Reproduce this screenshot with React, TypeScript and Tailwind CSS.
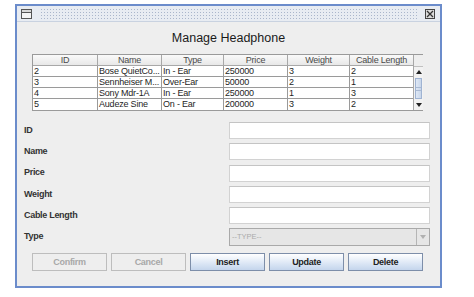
import React from "react";

const rows = [
  ["2", "Bose QuietCo...", "In - Ear", "250000", "3", "2"],
  ["3", "Sennheiser M...", "Over-Ear", "50000", "2", "1"],
  ["4", "Sony Mdr-1A", "In - Ear", "250000", "1", "3"],
  ["5", "Audeze Sine", "On - Ear", "200000", "3", "2"],
];

const headers = ["ID", "Name", "Type", "Price", "Weight", "Cable Length"];
const widths = ["w-[64px]", "w-[64px]", "w-[62px]", "w-[64px]", "w-[62px]", "w-[64px]"];

const labels = ["ID", "Name", "Price", "Weight", "Cable Length"];

function TitleBar() {
  return (
    <div className="h-[16px] flex items-center bg-[#e8ecf2] border-b border-[#c9d2e0]">
      <div className="ml-[4px] w-[11px] h-[10px] border border-[#555] bg-[#f4f4f4] flex flex-col">
        <div className="h-[3px] border-b border-[#555] bg-[#d8d8d8]" />
      </div>
      <div className="flex-1 h-[12px] mx-[8px] bg-[radial-gradient(#aab6cb_0.7px,transparent_0.9px)] bg-[length:3px_3px]" />
      <div className="mr-[5px] w-[10px] h-[10px] border border-[#444] bg-[#dcdcdc] flex items-center justify-center">
        <svg width="8" height="8" viewBox="0 0 8 8">
          <path d="M1 1 L7 7 M7 1 L1 7" stroke="#333" strokeWidth="1.3" />
        </svg>
      </div>
    </div>
  );
}

function HeadphoneTable() {
  return (
    <div className="ml-[15px] w-[391px] flex border border-[#9a9a9a] text-[9px] tracking-[-0.2px] leading-none">
      <div className="flex flex-col">
        <div className="flex h-[11px] bg-[linear-gradient(#fafafa,#e6e6e6)]">
          {headers.map((h, i) => (
            <div
              key={h}
              className={`${widths[i]} ${i > 0 ? "border-l border-[#a8a8a8]" : ""} border-b border-[#a8a8a8] flex items-center justify-center text-[#4a4a4a]`}
            >
              {h}
            </div>
          ))}
        </div>
        {rows.map((r, ri) => (
          <div key={ri} className="flex h-[11px] bg-white">
            {r.map((c, ci) => (
              <div
                key={ci}
                className={`${widths[ci]} ${ci > 0 ? "border-l border-[#9a9a9a]" : ""} ${ri < rows.length - 1 ? "border-b border-[#9a9a9a]" : ""} flex items-center pl-[1px] text-[#1e1e1e] overflow-hidden whitespace-nowrap`}
              >
                {c}
              </div>
            ))}
          </div>
        ))}
      </div>
      <div className="w-[11px] flex flex-col border-l border-[#a8a8a8] bg-[#eeeeee]">
        <div className="h-[11px]" />
        <div className="flex-1 flex flex-col bg-[#f2f2f2] border-t border-[#c0c0c0]">
          <div className="h-[10px] flex items-center justify-center">
            <svg width="6" height="4" viewBox="0 0 6 4">
              <path d="M0 4 L3 0 L6 4 Z" fill="#222" />
            </svg>
          </div>
          <div className="mx-[1px] mt-[1px] h-[21px] border border-[#9fb3d2] bg-[linear-gradient(90deg,#dfe8f5,#c8d6ea)] flex items-center justify-center">
            <div className="w-[5px] h-[4px] border-y border-[#a9b9d2]" />
          </div>
          <div className="flex-1" />
          <div className="h-[10px] flex items-center justify-center">
            <svg width="6" height="4" viewBox="0 0 6 4">
              <path d="M0 0 L6 0 L3 4 Z" fill="#222" />
            </svg>
          </div>
        </div>
      </div>
    </div>
  );
}

function FormRow({ label, children }: { label: string; children: React.ReactNode }) {
  return (
    <div className="flex items-center h-[17px]">
      <div className="w-[205px] font-bold text-[9px] tracking-[-0.3px] text-[#333]">{label}</div>
      {children}
    </div>
  );
}

function Btn({ label, disabled }: { label: string; disabled?: boolean }) {
  return (
    <button
      disabled={disabled}
      className={
        disabled
          ? "w-[75px] h-[18px] border border-[#bdbdbd] bg-[#eeeeee] text-[#a8a8a8] font-bold text-[9px] tracking-[-0.3px]"
          : "w-[75px] h-[18px] border border-[#7d8ea9] bg-[linear-gradient(#ffffff,#dbe6f5_60%,#c4d5ec)] text-[#222] font-bold text-[9px] tracking-[-0.3px]"
      }
    >
      {label}
    </button>
  );
}

export default function App() {
  return (
    <div className="w-[474px] h-[297px] bg-white pt-[4px] pl-[15px] font-['Liberation_Sans',Arial,sans-serif]">
      <div className="w-[427px] h-[284px] border-2 border-[#6b8ccb] bg-[#eeeeee] flex flex-col">
        <TitleBar />
        <div className="h-[32px] flex items-center justify-center text-[12.5px] text-[#1a1a1a]">
          Manage Headphone
        </div>
        <HeadphoneTable />
        <div className="mt-[11px] pl-[7px] pr-[10px] flex flex-col gap-[4.3px]">
          {labels.map((l) => (
            <FormRow key={l} label={l}>
              <div className="flex-1 h-[17px] bg-white border border-[#d2d2d2] border-t-[#c4c4c4]" />
            </FormRow>
          ))}
          <FormRow label="Type">
            <div className="flex-1 h-[18px] flex bg-[#e6e6e6] border border-[#a9a9a9]">
              <div className="flex-1 flex items-center pl-[2px] text-[7.5px] text-[#ababab]">--TYPE--</div>
              <div className="w-[13px] border-l border-[#b5b5b5] flex items-center justify-center">
                <svg width="6" height="4" viewBox="0 0 6 4">
                  <path d="M0 0 L6 0 L3 4 Z" fill="#b0b0b0" />
                </svg>
              </div>
            </div>
          </FormRow>
        </div>
        <div className="mt-[8px] pl-[15px] flex gap-[4px]">
          <Btn label="Confirm" disabled />
          <Btn label="Cancel" disabled />
          <Btn label="Insert" />
          <Btn label="Update" />
          <Btn label="Delete" />
        </div>
      </div>
    </div>
  );
}
